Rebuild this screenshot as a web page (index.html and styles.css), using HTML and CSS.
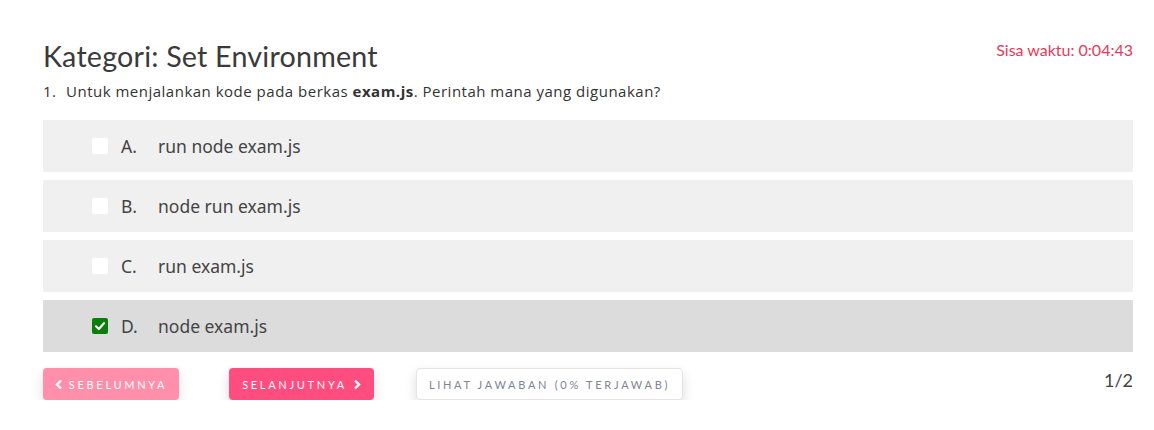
FILE: index.html
```html
<!DOCTYPE html>
<html>
<head>
<meta charset="utf-8">
<link rel="stylesheet" href="styles.css">
</head>
<body>
<div class="quiz">
  <div class="header">
    <h1 class="title">Kategori: Set Environment</h1>
    <div class="timer">Sisa waktu: 0:04:43</div>
  </div>
  <p class="question"><span class="qnum">1.</span>Untuk menjalankan kode pada berkas <b>exam.js</b>. Perintah mana yang digunakan?</p>
  <div class="options">
    <label class="option"><span class="check"></span><span class="letter">A.</span><span class="text">run node exam.js</span></label>
    <label class="option"><span class="check"></span><span class="letter">B.</span><span class="text">node run exam.js</span></label>
    <label class="option"><span class="check"></span><span class="letter">C.</span><span class="text">run exam.js</span></label>
    <label class="option selected"><span class="check checked"><svg viewBox="0 0 16 16" width="16" height="16"><path d="M4 8.3 L6.8 11 L12 5.2" fill="none" stroke="#fff" stroke-width="2.2" stroke-linecap="round" stroke-linejoin="round"/></svg></span><span class="letter">D.</span><span class="text">node exam.js</span></label>
  </div>
  <div class="footer">
    <div class="buttons">
      <button class="btn btn-prev"><svg class="chev" viewBox="0 0 8 10" width="8" height="11"><path d="M6 1 L2 5 L6 9" fill="none" stroke="#fff" stroke-width="2.4"/></svg>Sebelumnya</button>
      <button class="btn btn-next">Selanjutnya<svg class="chev" viewBox="0 0 8 10" width="8" height="11"><path d="M2 1 L6 5 L2 9" fill="none" stroke="#fff" stroke-width="2.4"/></svg></button>
      <button class="btn btn-view">Lihat Jawaban (0% Terjawab)</button>
    </div>
    <div class="page">1/2</div>
  </div>
</div>
</body>
</html>
```
FILE: styles.css
```css
html, body {
  margin: 0;
  padding: 0;
  background: #fff;
}
body {
  font-family: "Lato", "Noto Sans", sans-serif;
  color: #333;
}
.quiz {
  width: 1090px;
  margin-left: 43px;
  padding-top: 38px;
}
.header {
  display: flex;
  justify-content: space-between;
  align-items: flex-start;
}
.title {
  margin: 0;
  font-weight: 400;
  font-size: 28.7px;
  line-height: 36px;
  color: #3a3a3a;
  letter-spacing: 0.2px;
}
.timer {
  font-size: 16px;
  color: #e63a5a;
  margin-top: 2px;
}
.question {
  margin: 6px 0 0 0;
  font-family: "Open Sans", sans-serif;
  font-size: 15px;
  letter-spacing: 0.5px;
  line-height: 22px;
  color: #333;
}
.question b { font-weight: 700; }
.qnum {
  display: inline-block;
  width: 23px;
}
.options {
  margin-top: 18px;
  display: flex;
  flex-direction: column;
  gap: 8px;
}
.option {
  height: 52px;
  background: #f0f0f0;
  display: flex;
  align-items: center;
  padding-left: 49px;
  font-family: "Noto Sans", sans-serif;
  font-size: 17.5px;
  color: #444;
}
.option.selected { background: #dcdcdc; }
.check {
  width: 16px;
  height: 16px;
  background: #fff;
  border-radius: 2px;
  display: inline-flex;
}
.check.checked { background: #0a7d0a; }
.letter {
  margin-left: 13px;
  width: 37px;
}
.footer {
  display: flex;
  justify-content: space-between;
  align-items: center;
  margin-top: 16px;
}
.buttons {
  display: flex;
}
.btn {
  font-family: "Lato", sans-serif;
  font-size: 11px;
  letter-spacing: 2.7px;
  text-transform: uppercase;
  white-space: nowrap;
  height: 32px;
  border: none;
  border-radius: 4px;
  display: inline-flex;
  align-items: center;
  justify-content: center;
  gap: 6px;
  box-shadow: 0 5px 12px rgba(0,0,0,0.14);
  color: #fff;
  padding: 0;
}
.btn-prev {
  background: #ff8fab;
  width: 136px;
}
.btn-next {
  background: #ff4d80;
  margin-left: 50px;
  width: 145px;
}
.btn-view {
  background: #fff;
  color: #7d8595;
  margin-left: 42px;
  width: 267px;
  border: 1px solid #e4e4e4;
}
.page {
  font-size: 18px;
  color: #444;
  margin-top: -8px;
}
```
